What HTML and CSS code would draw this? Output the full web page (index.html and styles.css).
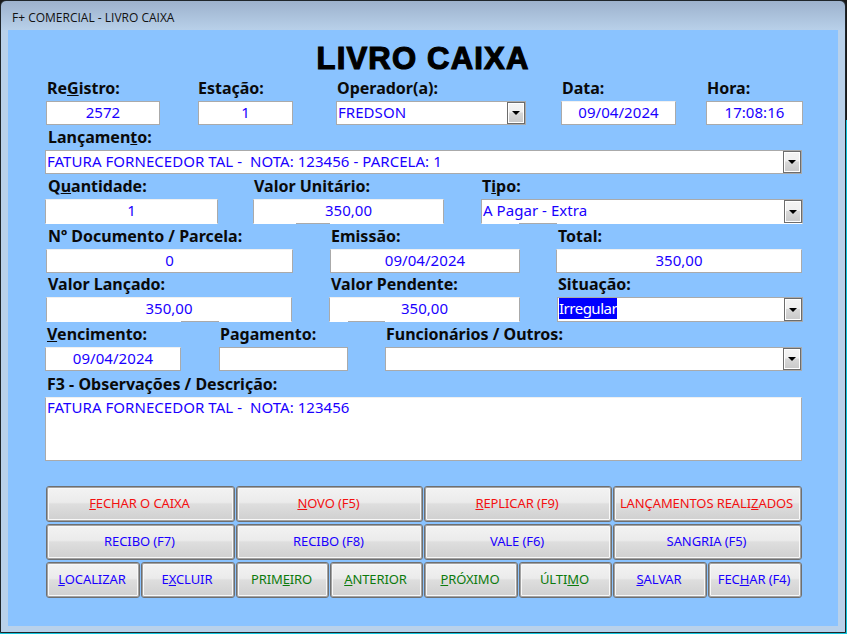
FILE: index.html
```html
<!DOCTYPE html>
<html lang="pt-BR">
<head>
<meta charset="utf-8">
<title>F+ COMERCIAL - LIVRO CAIXA</title>
<link rel="stylesheet" href="styles.css">
</head>
<body>
<div class="window">
  <div class="titlebar">F+ COMERCIAL - LIVRO CAIXA</div>
  <main class="client">
    <h1 class="heading">LIVRO CAIXA</h1>
    <form class="form">
      <div class="row">
        <div class="field f-registro"><span class="label lab-in1">Re<u>G</u>istro:</span><div class="input center">2572</div></div>
        <div class="field f-estacao"><span class="label">Estação:</span><div class="input center">1</div></div>
        <div class="field f-operador"><span class="label lab-in1">Operador(a):</span><div class="input combo"><span class="value">FREDSON</span><span class="arrow"></span></div></div>
        <div class="field f-data"><span class="label lab-in1">Data:</span><div class="input center soft-top">09/04/2024</div></div>
        <div class="field f-hora"><span class="label lab-in1">Hora:</span><div class="input center">17:08:16</div></div>
      </div>
      <div class="row">
        <div class="field f-lanc"><span class="label lab-in3">Lançamen<u>t</u>o:</span><div class="input combo"><span class="value">FATURA FORNECEDOR TAL -  NOTA: 123456 - PARCELA: 1</span><span class="arrow"></span></div></div>
      </div>
      <div class="row">
        <div class="field f-qtd"><span class="label lab-in3">Q<u>u</u>antidade:</span><div class="input center soft-top open-bottom">1</div></div>
        <div class="field f-unit"><span class="label lab-in1">Valor Unitário:</span><div class="input center soft-top open-bottom notch-unit">350,00</div></div>
        <div class="field f-tipo"><span class="label lab-in1">T<u>i</u>po:</span><div class="input combo open-bottom notch-tipo"><span class="value">A Pagar - Extra</span><span class="arrow"></span></div></div>
      </div>
      <div class="row">
        <div class="field f-doc"><span class="label lab-in2">Nº Documento / Parcela:</span><div class="input center soft-top">0</div></div>
        <div class="field f-emis"><span class="label lab-in1">Emissão:</span><div class="input center soft-top">09/04/2024</div></div>
        <div class="field f-total"><span class="label lab-in2">Total:</span><div class="input center soft-top">350,00</div></div>
      </div>
      <div class="row">
        <div class="field f-lancado"><span class="label lab-in2">Valor Lançado:</span><div class="input center soft-top open-bottom notch-lancado">350,00</div></div>
        <div class="field f-pend"><span class="label lab-in2">Valor Pendente:</span><div class="input center soft-top open-bottom notch-pend">350,00</div></div>
        <div class="field f-sit"><span class="label lab-in1">Situação:</span><div class="input combo"><span class="value"><span class="selected">Irregular</span></span><span class="arrow"></span></div></div>
      </div>
      <div class="row">
        <div class="field f-venc"><span class="label lab-in2"><u>V</u>encimento:</span><div class="input center soft-top">09/04/2024</div></div>
        <div class="field f-pag"><span class="label lab-in1">Pagamento:</span><div class="input center"></div></div>
        <div class="field f-func"><span class="label lab-in1">Funcionários / Outros:</span><div class="input combo"><span class="value"></span><span class="arrow"></span></div></div>
      </div>
      <div class="row">
        <div class="field f-obs"><span class="label lab-in2">F3 - Observações / Descrição:</span><div class="input memo soft-top">FATURA FORNECEDOR TAL -  NOTA: 123456</div></div>
      </div>
    </form>
    <div class="buttons">
      <button type="button" class="btn wide red"><u>F</u>ECHAR O CAIXA</button>
      <button type="button" class="btn wide red"><u>N</u>OVO (F5)</button>
      <button type="button" class="btn wide red"><u>R</u>EPLICAR (F9)</button>
      <button type="button" class="btn wide red">LANÇAMENTOS REALI<u>Z</u>ADOS</button>
      <button type="button" class="btn wide blue">RECIBO (F7)</button>
      <button type="button" class="btn wide blue">RECIBO (F8)</button>
      <button type="button" class="btn wide blue">VALE (F6)</button>
      <button type="button" class="btn wide blue">SANGRIA (F5)</button>
      <button type="button" class="btn blue"><u>L</u>OCALIZAR</button>
      <button type="button" class="btn blue">E<u>X</u>CLUIR</button>
      <button type="button" class="btn green">PRIM<u>E</u>IRO</button>
      <button type="button" class="btn green"><u>A</u>NTERIOR</button>
      <button type="button" class="btn green"><u>P</u>RÓXIMO</button>
      <button type="button" class="btn green">ÚLTI<u>M</u>O</button>
      <button type="button" class="btn blue"><u>S</u>ALVAR</button>
      <button type="button" class="btn blue">FEC<u>H</u>AR (F4)</button>
    </div>
  </main>
</div>
</body>
</html>
```
FILE: styles.css
```css
* { box-sizing: border-box; }
html, body { margin: 0; height: 100%; }
body {
  overflow: hidden;
  font-family: "Noto Sans", sans-serif;
  background: linear-gradient(#1a1a1a 0, #1a1a1a 120px, #12c4dc 120px);
}

.window {
  width: 846px;
  height: 633px;
  display: flex;
  flex-direction: column;
  padding: 0 7px 6px 7px;
  border: 1px solid #1f262b;
  border-radius: 6px 6px 0 0;
  background: linear-gradient(#9db2cd 0, #b9d1ea 30px);
}
.titlebar {
  height: 29px;
  padding: 9px 0 0 4px;
  font-family: "Open Sans", sans-serif;
  font-size: 12px;
  line-height: 15px;
  color: #111;
  white-space: nowrap;
}
.client {
  flex: 1;
  background: #8ac3ff;
  padding: 0 37px;
}
.heading {
  margin: 0;
  height: 48px;
  padding-top: 10px;
  text-align: center;
  font-family: "Liberation Sans", sans-serif;
  font-size: 31px;
  line-height: 38px;
  font-weight: 700;
  color: #000;
  -webkit-text-stroke: 1.2px #000;
  letter-spacing: 1.2px;
}

.form {
  display: grid;
  grid-template-rows: 49px 49px 50px 48px 50px 50px 86px;
}
.row { display: flex; align-items: flex-start; }
.field { display: flex; flex-direction: column; flex: none; }
.label {
  height: 23px;
  padding-top: 1px;
  font-size: 16px;
  line-height: 19px;
  font-weight: 700;
  color: #0a0a0a;
  white-space: nowrap;
}
.lab-in1 { padding-left: 1px; }
.lab-in2 { padding-left: 2px; }
.lab-in3 { padding-left: 3px; }

.input {
  position: relative;
  height: 24px;
  border: 1px solid #aaa;
  background: #fff;
  color: #1a00ff;
  font-size: 15px;
  line-height: 21px;
  letter-spacing: 0.05px;
  white-space: pre;
}
.soft-top { border-top-color: #f0f0f0; }
.open-bottom { border-bottom-color: #fff; }
.notch-unit::after, .notch-tipo::after, .notch-lancado::after, .notch-pend::after {
  content: "";
  position: absolute;
  bottom: -1px;
  height: 1px;
  background: #aaa;
}
.notch-unit::after { left: 42px; width: 34px; }
.notch-tipo::after { left: 37px; width: 38px; }
.notch-lancado::after { left: 134px; width: 38px; }
.notch-pend::after { left: 18px; width: 37px; }

.center { text-align: center; }
.combo { display: flex; justify-content: space-between; padding: 0 0 0 1px; }
.value { flex: 1; overflow: hidden; }
.selected {
  display: inline-block;
  height: 21px;
  line-height: 21px;
  background: #0000ff;
  color: #fff;
  letter-spacing: -0.5px;
}
.arrow {
  flex: none;
  width: 18px;
  height: 22px;
  border: 1px solid #6c6c6c;
  outline: 1px solid #fff;
  outline-offset: -2px;
  background: linear-gradient(#f4f4f4 0, #f0f0f0 45%, #d8d8d8 50%, #c8c8c8 100%);
  display: flex;
  align-items: center;
  justify-content: center;
}
.arrow::after {
  content: "";
  width: 0;
  height: 0;
  border-left: 4px solid transparent;
  border-right: 4px solid transparent;
  border-top: 4px solid #000;
}

.f-registro { width: 114px; margin-left: 1px; }
.f-estacao { width: 95px; margin-left: 38px; }
.f-operador { width: 190px; margin-left: 43px; }
.f-data { width: 115px; margin-left: 35px; }
.f-hora { width: 97px; margin-left: 30px; }
.f-lanc { width: 757px; }
.f-qtd { width: 173px; }
.f-unit { width: 191px; margin-left: 35px; }
.f-tipo { width: 322px; margin-left: 37px; }
.f-doc { width: 247px; margin-left: 1px; }
.f-emis { width: 190px; margin-left: 37px; }
.f-total { width: 246px; margin-left: 36px; }
.f-lancado { width: 246px; margin-left: 1px; }
.f-pend { width: 191px; margin-left: 37px; }
.f-sit { width: 246px; margin-left: 37px; }
.f-venc { width: 136px; }
.f-pag { width: 129px; margin-left: 38px; }
.f-func { width: 417px; margin-left: 37px; }
.f-obs { width: 757px; }
.f-obs .input.memo { height: 64px; padding: 0 1px; line-height: 18px; }
.f-lancado .input, .f-pend .input, .f-sit .input,
.f-qtd .input, .f-unit .input, .f-tipo .input { height: 25px; }
.f-lancado .arrow, .f-sit .arrow, .f-tipo .arrow { height: 23px; }

.buttons {
  display: grid;
  grid-template-columns: 94px 94px 93px 93px 94px 93px 94px 94px;
  grid-auto-rows: 36px;
  column-gap: 1px;
  row-gap: 2px;
  width: 756px;
  margin: 26px 0 0 1px;
}
.btn {
  border: 1px solid #6f6f6f;
  box-shadow: inset 0 0 0 1px #a2a2a2, inset 0 0 0 2px #f8f8f8;
  border-radius: 3px;
  padding: 0 2px 2px 0;
  font-family: "Noto Sans", sans-serif;
  font-size: 13px;
  letter-spacing: -0.1px;
  white-space: nowrap;
  background: linear-gradient(#f3f3f3 0, #ebebeb 45%, #dedede 50%, #cfcfcf 100%);
}
.wide { grid-column: span 2; }
.red { color: #f31010; }
.blue { color: #1a00ff; }
.green { color: #0c7a0c; }
```
